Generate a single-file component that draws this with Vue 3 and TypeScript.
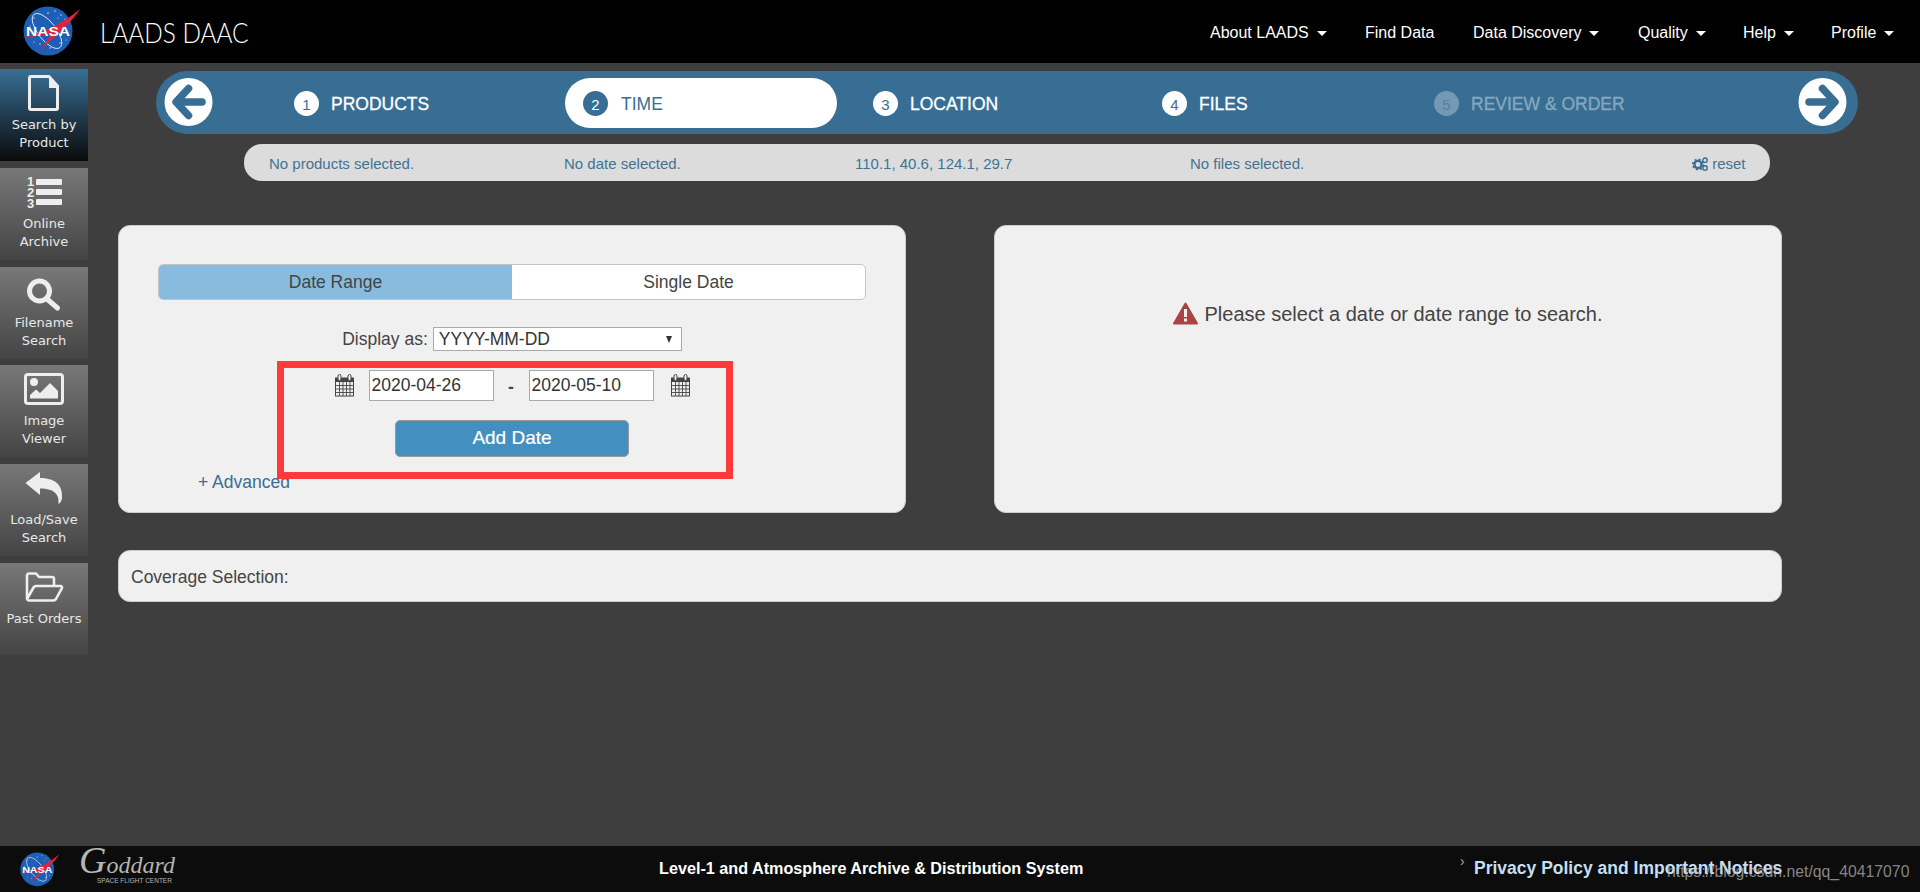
<template>
  <div class="page">
    <!-- shared logo, used in header and footer -->
    <svg width="0" height="0" class="defs">
      <symbol id="nasa" viewBox="0 0 64 52">
        <circle cx="28" cy="25" r="24.5" fill="#1c5fb4" />
        <g fill="#dfe9f7">
          <circle cx="28" cy="7" r=".8" /><circle cx="35" cy="5" r=".7" /><circle cx="41" cy="9" r=".7" />
          <circle cx="45" cy="13" r=".6" /><circle cx="38" cy="12" r=".6" /><circle cx="14" cy="12" r=".7" />
          <circle cx="10" cy="20" r=".6" /><circle cx="20" cy="38" r=".7" /><circle cx="30" cy="42" r=".7" />
          <circle cx="40" cy="37" r=".7" /><circle cx="46" cy="34" r=".6" /><circle cx="14" cy="36" r=".6" />
        </g>
        <ellipse cx="27" cy="25" rx="9" ry="21" fill="none" stroke="#dfe9f7" stroke-width=".9" transform="rotate(-38 27 25)" />
        <path d="M1 32 C22 27 44 17 60 3 C52 17 36 28 19 46 C27 34 30 30 33 27 C24 29 12 31 1 32Z" fill="#e0243a" />
        <text x="28" y="30" text-anchor="middle" class="nasa-text" textLength="44" lengthAdjust="spacingAndGlyphs">NASA</text>
      </symbol>
    </svg>

    <header class="top">
      <svg class="logo" width="64" height="52"><use href="#nasa" /></svg>
      <div class="brand">LAADS DAAC</div>
      <nav class="nav">
        <a v-for="item in navItems" :key="item.label" class="nav-item" :style="{ left: item.left + 'px' }">
          {{ item.label }}<i v-if="item.caret" class="caret" />
        </a>
      </nav>
    </header>

    <main class="main">
      <aside class="side">
        <a class="side-btn active">
          <span class="side-icon">
            <svg width="40" height="42" viewBox="0 0 40 42">
              <path d="M7 7.500H25L33.500 17V39a1.500 1.500 0 0 1-1.500 1.500H7A1.500 1.500 0 0 1 5.500 39V9A1.500 1.500 0 0 1 7 7.500Z" fill="none" stroke="#eee" stroke-width="3" />
              <path d="M25 7L35 19H25Z" fill="#eee" />
            </svg>
          </span>
          <span>Search by<br />Product</span>
        </a>
        <a class="side-btn">
          <span class="side-icon">
            <svg width="40" height="42" viewBox="0 0 40 42">
              <g fill="#eee">
                <rect x="12" y="11" width="26" height="6" rx="1" />
                <rect x="12" y="21" width="26" height="6" rx="1" />
                <rect x="12" y="31" width="26" height="6" rx="1" />
              </g>
              <text x="6.500" y="17.500" class="num">1</text>
              <text x="6.500" y="28.500" class="num">2</text>
              <text x="6.500" y="39.500" class="num">3</text>
            </svg>
          </span>
          <span>Online<br />Archive</span>
        </a>
        <a class="side-btn">
          <span class="side-icon">
            <svg width="40" height="42" viewBox="0 0 40 42">
              <circle cx="15.500" cy="24" r="10" fill="none" stroke="#eee" stroke-width="5" />
              <path d="M23 32L33.500 41" stroke="#eee" stroke-width="5" stroke-linecap="round" />
            </svg>
          </span>
          <span>Filename<br />Search</span>
        </a>
        <a class="side-btn">
          <span class="side-icon">
            <svg width="40" height="42" viewBox="0 0 40 42">
              <rect x="1.5" y="9.5" width="37" height="29" rx="2.5" fill="none" stroke="#eee" stroke-width="3" />
              <circle cx="10" cy="17" r="4" fill="#eee" />
              <path d="M6 33.5V30L12 24.500L16 28L26 18L34 26V33.500Z" fill="#eee" />
            </svg>
          </span>
          <span>Image<br />Viewer</span>
        </a>
        <a class="side-btn">
          <span class="side-icon">
            <svg width="40" height="42" viewBox="0 0 40 42">
              <path d="M1.500 19L16 8V14C30 14 39 20 38 34C37.500 37 36 39.500 34.500 40C35.500 31 31 24.500 16 24.500V31Z" fill="#eee" />
            </svg>
          </span>
          <span>Load/Save<br />Search</span>
        </a>
        <a class="side-btn">
          <span class="side-icon">
            <svg width="40" height="42" viewBox="0 0 40 42">
              <path d="M3 36V12.500A2 2 0 0 1 5 10.500H12L15 14H28A2 2 0 0 1 30 16V22M3 36L9.500 24.500A3 3 0 0 1 12 23H36.500A1.500 1.500 0 0 1 37.800 25.300L32 36A3 3 0 0 1 29.500 37.500H5A2 2 0 0 1 3 36Z" fill="none" stroke="#eee" stroke-width="2.600" stroke-linejoin="round" />
            </svg>
          </span>
          <span>Past Orders</span>
        </a>
      </aside>

      <section class="content">
        <div class="wizard">
          <a class="round back">
            <svg width="49" height="48" viewBox="0 0 49 48">
              <circle cx="24.500" cy="24" r="24" fill="#fff" />
              <path d="M24.500 10.500L12 24L24.500 37.500M13 24H38" fill="none" stroke="#386e94" stroke-width="7.500" stroke-linejoin="round" stroke-linecap="round" />
            </svg>
          </a>
          <div class="steps">
            <div
              v-for="step in steps"
              :key="step.num"
              class="step"
              :class="{ current: step.current, disabled: step.disabled }"
            >
              <span class="step-num">{{ step.num }}</span>
              <span class="step-label">{{ step.label }}</span>
            </div>
          </div>
          <a class="round next">
            <svg width="49" height="48" viewBox="0 0 49 48">
              <circle cx="24.500" cy="24" r="24" fill="#fff" />
              <path d="M24.500 10.500L37 24L24.500 37.500M36 24H11" fill="none" stroke="#386e94" stroke-width="7.500" stroke-linejoin="round" stroke-linecap="round" />
            </svg>
          </a>
        </div>

        <div class="summary">
          <span>No products selected.</span>
          <span>No date selected.</span>
          <span>110.1, 40.6, 124.1, 29.7</span>
          <span>No files selected.</span>
          <span class="reset">
            <svg width="16" height="14" viewBox="0 0 16 14">
              <circle cx="6" cy="7.500" r="3.600" fill="none" stroke="#386e94" stroke-width="2.400" />
              <circle cx="6" cy="7.500" r="5.300" fill="none" stroke="#386e94" stroke-width="1.600" stroke-dasharray="2 2.160" />
              <circle cx="13" cy="3.200" r="2.200" fill="none" stroke="#386e94" stroke-width="1.400" />
              <circle cx="13" cy="11" r="2.200" fill="none" stroke="#386e94" stroke-width="1.400" />
            </svg>
            reset
          </span>
        </div>

        <div class="panels">
          <div class="panel left">
            <div class="toggle">
              <div class="tab on">Date Range</div>
              <div class="tab">Single Date</div>
            </div>
            <div class="display">
              <label>Display as:</label>
              <div class="select">YYYY-MM-DD<i class="select-arrow" /></div>
            </div>
            <div class="dates">
              <svg v-for="side in 2" :key="side" class="cal" :class="'cal-' + side" width="21" height="23" viewBox="0 0 21 23">
                <path d="M1 3.500H20V22.500H1Z" fill="#444" />
                <path d="M2 8H19V21.500H2Z" fill="#f0f0f0" />
                <path d="M2 11.500H19M2 15H19M2 18.500H19M5.500 8V22M9 8V22M12.500 8V22M16 8V22" stroke="#444" stroke-width=".9" />
                <rect x="4" y=".5" width="3" height="6" rx="1.500" fill="#f0f0f0" stroke="#444" />
                <rect x="14" y=".5" width="3" height="6" rx="1.500" fill="#f0f0f0" stroke="#444" />
              </svg>
              <input class="date-input first" value="2020-04-26" />
              <span class="dash">-</span>
              <input class="date-input" value="2020-05-10" />
            </div>
            <button class="add">Add Date</button>
            <a class="advanced">+ Advanced</a>
            <div class="mark" />
          </div>

          <div class="panel right">
            <svg width="25" height="23" viewBox="0 0 25 23">
              <path d="M12.500 1.500L24 21.500H1Z" fill="#a94442" stroke="#a94442" stroke-width="2" stroke-linejoin="round" />
              <rect x="11" y="7" width="3" height="8" fill="#f0f0f0" />
              <rect x="11" y="16.500" width="3" height="3" fill="#f0f0f0" />
            </svg>
            <span>Please select a date or date range to search.</span>
          </div>
        </div>

        <div class="coverage">Coverage Selection:</div>
      </section>
    </main>

    <footer class="bottom">
      <svg class="logo-small" width="44" height="36"><use href="#nasa" /></svg>
      <div class="goddard">
        <span class="goddard-name">Goddard</span>
        <span class="goddard-sub">SPACE FLIGHT CENTER</span>
      </div>
      <div class="foot-title">Level-1 and Atmosphere Archive &amp; Distribution System</div>
      <span class="chev">›</span>
      <a class="privacy">Privacy Policy and Important Notices</a>
      <span class="watermark">https://blog.csdn.net/qq_40417070</span>
    </footer>
  </div>
</template>

<script setup lang="ts">
interface NavItem {
  label: string
  left: number
  caret: boolean
}

interface Step {
  num: number
  label: string
  current?: boolean
  disabled?: boolean
}

const navItems: NavItem[] = [
  { label: 'About LAADS', left: 1210, caret: true },
  { label: 'Find Data', left: 1365, caret: false },
  { label: 'Data Discovery', left: 1473, caret: true },
  { label: 'Quality', left: 1638, caret: true },
  { label: 'Help', left: 1743, caret: true },
  { label: 'Profile', left: 1831, caret: true },
]

const steps: Step[] = [
  { num: 1, label: 'PRODUCTS' },
  { num: 2, label: 'TIME', current: true },
  { num: 3, label: 'LOCATION' },
  { num: 4, label: 'FILES' },
  { num: 5, label: 'REVIEW & ORDER', disabled: true },
]
</script>

<style>
html,
body {
  margin: 0;
  background: #3e3e3e;
}
</style>

<style scoped>
.page {
  width: 1920px;
  height: 892px;
  display: flex;
  flex-direction: column;
  overflow: hidden;
  background: #3e3e3e;
  font-family: "Liberation Sans", Arial, sans-serif;
  color: #444;
}

.defs {
  position: absolute;
}

svg {
  overflow: visible;
}

.nasa-text {
  font: bold 13px "Liberation Sans", Arial, sans-serif;
  fill: #fff;
}

/* Header */
.top {
  position: relative;
  height: 63px;
  flex: none;
  background: #000;
  display: flex;
  align-items: center;
}

.logo {
  margin-left: 20px;
}

.brand {
  margin-left: 16px;
  font-family: Lato, sans-serif;
  font-weight: 300;
  font-size: 28px;
  color: #fff;
  transform: scaleX(0.87);
  transform-origin: left center;
}

.nav-item {
  position: absolute;
  top: 24px;
  font-size: 16px;
  line-height: 18px;
  color: #fff;
  white-space: nowrap;
}

.caret {
  display: inline-block;
  margin-left: 8px;
  vertical-align: 2px;
  border-top: 5px solid #fff;
  border-left: 5px solid transparent;
  border-right: 5px solid transparent;
}

/* Layout */
.main {
  flex: 1;
  display: flex;
  min-height: 0;
}

.side {
  width: 88px;
  flex: none;
  padding-top: 6px;
  display: flex;
  flex-direction: column;
  gap: 6.8px;
}

.side-btn {
  height: 92px;
  display: block;
  box-sizing: border-box;
  text-align: center;
  font-family: "DejaVu Sans", sans-serif;
  font-size: 13px;
  line-height: 18px;
  color: #e8e8e8;
  background: linear-gradient(#787878, #444);
}

.side-btn.active {
  background: linear-gradient(#386e94, #0b0b0b);
}

.side-icon {
  display: flex;
  justify-content: center;
  height: 47px;
}

.num {
  font: bold 13px "Liberation Sans", Arial, sans-serif;
  fill: #eee;
  text-anchor: middle;
}

.content {
  flex: 1;
  min-width: 0;
}

/* Wizard */
.wizard {
  margin: 8px 0 0 68px;
  width: 1702px;
  height: 63px;
  box-sizing: border-box;
  padding: 7px 11px 8px 8px;
  border-radius: 32px;
  background: #386e94;
  display: flex;
  align-items: flex-start;
}

.round {
  display: block;
  width: 49px;
  height: 48px;
  flex: none;
}

.steps {
  margin-left: 63px;
  flex: 1;
  display: grid;
  grid-template-columns: 289px 290px 289px 272px 1fr;
}

.step {
  width: 272px;
  height: 50px;
  display: flex;
  align-items: center;
  padding-left: 18px;
  box-sizing: border-box;
  border-radius: 25px;
  color: #fff;
  font-size: 17.500px;
  -webkit-text-stroke: 0.300px #fff;
}

.step-label {
  margin: 2px 0 0 -1px;
}

.step-num {
  width: 25px;
  height: 25px;
  margin-right: 13px;
  border-radius: 50%;
  background: #fff;
  color: #386e94;
  font-size: 15px;
  line-height: 27px;
  text-align: center;
  -webkit-text-stroke: 0;
}

.step.current {
  background: #fff;
  color: #386e94;
  -webkit-text-stroke: 0;
}

.step.current .step-label {
  margin-left: 0;
}

.step.current .step-num {
  background: #386e94;
  color: #fff;
}

.step.disabled {
  color: #88a8bf;
  -webkit-text-stroke: 0.300px #88a8bf;
}

.step.disabled .step-num {
  background: #7399b4;
  color: #54809f;
}

/* Summary */
.summary {
  margin: 10px 0 0 156px;
  width: 1526px;
  height: 37px;
  box-sizing: border-box;
  padding: 2px 0 0 25px;
  border-radius: 18px;
  background: #dcdcdc;
  color: #3f7396;
  font-size: 15px;
  display: grid;
  grid-template-columns: 295px 291px 335px 502px 1fr;
  align-items: center;
}

.reset {
  white-space: nowrap;
}

.reset svg {
  vertical-align: -2px;
}

/* Panels */
.panels {
  margin: 44px 0 0 30px;
  display: flex;
  gap: 88px;
}

.panel {
  width: 788px;
  height: 288px;
  box-sizing: border-box;
  background: #f0f0f0;
  border: 1px solid #ccc;
  border-radius: 12px;
}

.left {
  position: relative;
  padding: 38px 39px 0;
  font-size: 17.500px;
}

.toggle {
  display: flex;
  height: 36px;
  border: 1px solid #c4c4c4;
  border-radius: 5px;
  overflow: hidden;
  background: #fff;
  box-sizing: border-box;
}

.tab {
  width: 50%;
  text-align: center;
  line-height: 34px;
}

.tab.on {
  background: #89bbdf;
}

.display {
  margin-top: 27px;
  display: flex;
  justify-content: center;
  align-items: center;
}

.display label {
  margin-right: 5px;
}

.select {
  position: relative;
  width: 249px;
  height: 24px;
  box-sizing: border-box;
  padding-left: 5px;
  background: #fff;
  border: 1px solid #aaa;
  line-height: 22px;
  color: #333;
}

.select-arrow {
  position: absolute;
  right: 9px;
  top: 8px;
  border-top: 7px solid #333;
  border-left: 3.500px solid transparent;
  border-right: 3.500px solid transparent;
}

.dates {
  position: relative;
  margin: 19px 0 0 -2px;
  display: flex;
  justify-content: center;
  align-items: center;
}

.cal {
  position: absolute;
  top: 4px;
}

.cal-1 {
  left: 178px;
}

.cal-2 {
  left: 514px;
}

.date-input {
  width: 125px;
  height: 31px;
  box-sizing: border-box;
  padding: 0 2px;
  border: 1px solid #aaa;
  background: #fff;
  font: 17.500px "Liberation Sans", Arial, sans-serif;
  color: #333;
}

.dash {
  width: 35px;
  text-align: center;
  font-weight: bold;
  margin-top: 4px;
}

.add {
  display: block;
  margin: 19px auto 0;
  padding: 0 0 2px;
  width: 234px;
  height: 37px;
  border: 1px solid #999;
  border-radius: 5px;
  background: #438fc0;
  color: #fff;
  font: 19px "Liberation Sans", Arial, sans-serif;
  -webkit-text-stroke: 0.200px #fff;
}

.advanced {
  display: block;
  margin: 16px 0 0 40px;
  line-height: 18px;
  color: #386e94;
}

.mark {
  position: absolute;
  left: 158px;
  top: 135px;
  width: 456px;
  height: 118px;
  box-sizing: border-box;
  border: 7px solid #ff3a3a;
}

.right {
  padding-top: 76px;
  display: flex;
  justify-content: center;
  align-items: flex-start;
  gap: 6px;
  font-size: 20px;
  line-height: 24px;
}

.coverage {
  margin: 37px 0 0 30px;
  width: 1664px;
  height: 52px;
  box-sizing: border-box;
  padding-left: 12px;
  background: #f0f0f0;
  border: 1px solid #ccc;
  border-radius: 12px;
  font-size: 17.500px;
  line-height: 52px;
}

/* Footer */
.bottom {
  position: relative;
  height: 46px;
  flex: none;
  background: #0c0c0c;
  color: #fff;
}

.logo-small {
  position: absolute;
  left: 18px;
  top: 6px;
}

.goddard {
  position: absolute;
  left: 79px;
  top: 0;
  color: #b5b5b5;
}

.goddard-name {
  display: block;
  width: 110px;
  font: italic 24px/28px "Liberation Serif", serif;
  white-space: nowrap;
}

.goddard-name::first-letter {
  font-size: 38px;
}

.goddard-sub {
  position: absolute;
  left: 18px;
  top: 31px;
  font-size: 6.500px;
  white-space: nowrap;
}

.foot-title {
  position: absolute;
  left: 659px;
  top: 13px;
  font-size: 16.200px;
  line-height: 18px;
  font-weight: bold;
  white-space: nowrap;
}

.chev {
  position: absolute;
  left: 1460px;
  top: 7px;
  font-size: 14px;
  color: #aaa;
}

.privacy {
  position: absolute;
  left: 1474px;
  top: 13px;
  font-size: 17.500px;
  line-height: 18px;
  font-weight: bold;
  color: #c5dff2;
  white-space: nowrap;
}

.watermark {
  position: absolute;
  left: 1667px;
  top: 17px;
  font-size: 15.800px;
  line-height: 18px;
  color: rgba(190, 190, 190, 0.7);
  white-space: nowrap;
}
</style>
